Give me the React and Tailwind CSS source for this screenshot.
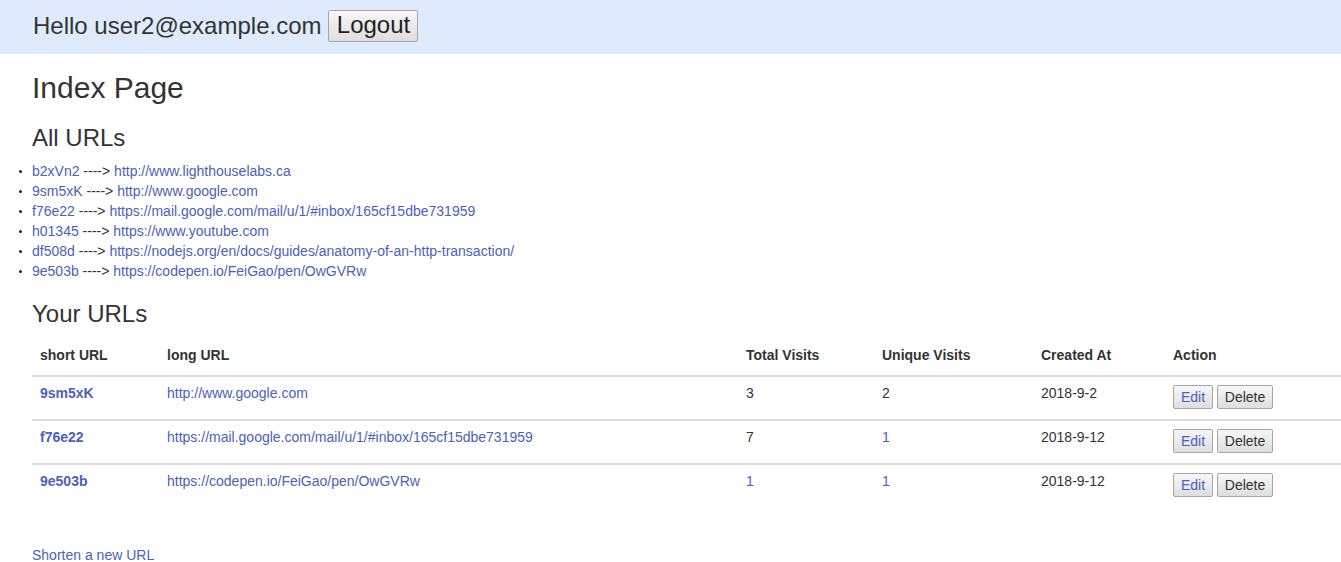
const link = 'text-[#4a5fc1]';

const allUrls = [
  ['b2xVn2', 'http://www.lighthouselabs.ca'],
  ['9sm5xK', 'http://www.google.com'],
  ['f76e22', 'https://mail.google.com/mail/u/1/#inbox/165cf15dbe731959'],
  ['h01345', 'https://www.youtube.com'],
  ['df508d', 'https://nodejs.org/en/docs/guides/anatomy-of-an-http-transaction/'],
  ['9e503b', 'https://codepen.io/FeiGao/pen/OwGVRw'],
];

const yourUrls = [
  { short: '9sm5xK', long: 'http://www.google.com', total: '3', totalLink: false, unique: '2', uniqueLink: false, created: '2018-9-2' },
  { short: 'f76e22', long: 'https://mail.google.com/mail/u/1/#inbox/165cf15dbe731959', total: '7', totalLink: false, unique: '1', uniqueLink: true, created: '2018-9-12' },
  { short: '9e503b', long: 'https://codepen.io/FeiGao/pen/OwGVRw', total: '1', totalLink: true, unique: '1', uniqueLink: true, created: '2018-9-12' },
];

const cols = 'grid grid-cols-[127px_579px_136px_159px_132px_1fr]';

function NativeButton({ children, className = '' }) {
  return (
    <button
      className={`rounded-[2px] border border-[#a6a6a6] bg-gradient-to-b from-[#f7f7f7] to-[#dedede] ${className}`}
    >
      {children}
    </button>
  );
}

export default function App() {
  return (
    <div className="min-h-[562px] bg-white font-['Liberation_Sans',Arial,sans-serif] text-[14px] text-[#333]">
      <header className="flex h-[54px] items-center bg-[#dfebfc] pl-[33px] text-[24px] leading-[28px]">
        <span className="-mt-[2px]">Hello user2@example.com</span>
        <NativeButton className="-mt-[2px] ml-[7px] h-[32px] w-[90px] pb-[3px] text-[24px] leading-[26px] text-[#222]">Logout</NativeButton>
      </header>

      <div className="pl-[32px]">
        <h1 className="mt-[17px] text-[30px] leading-[33px]">Index Page</h1>
        <h3 className="mt-[21px] text-[24px] leading-[26px]">All URLs</h3>
      </div>

      <ul className="mt-[10px]">
        {allUrls.map(([s, l]) => (
          <li key={s} className="flex h-[20px] items-center leading-[20px]">
            <span className="ml-[19px] mr-[10px] h-[3px] w-[3px] rounded-full bg-[#222]" />
            <a className={link}>{s}</a>
            <span>&nbsp;----&gt;&nbsp;</span>
            <a className={link}>{l}</a>
          </li>
        ))}
      </ul>

      <div className="pl-[32px]">
        <h3 className="mt-[20px] text-[24px] leading-[26px]">Your URLs</h3>

        <div className="mt-[10px] leading-[20px]">
          <div className={`${cols} h-[40px] border-b-2 border-[#ddd] pt-[8px] font-bold`}>
            <div className="px-[8px]">short URL</div>
            <div className="px-[8px]">long URL</div>
            <div className="px-[8px]">Total Visits</div>
            <div className="px-[8px]">Unique Visits</div>
            <div className="px-[8px]">Created At</div>
            <div className="px-[8px]">Action</div>
          </div>
          {yourUrls.map((r, i) => (
            <div key={r.short} className={`${cols} ${i > 0 ? 'h-[44px] border-t-2 border-[#ddd]' : 'h-[42px]'} pt-[6px]`}>
              <div className={`px-[8px] font-bold ${link}`}>{r.short}</div>
              <div className={`px-[8px] ${link}`}>{r.long}</div>
              <div className={`px-[8px] ${r.totalLink ? link : ''}`}>{r.total}</div>
              <div className={`px-[8px] ${r.uniqueLink ? link : ''}`}>{r.unique}</div>
              <div className="px-[8px]">{r.created}</div>
              <div className="flex gap-[4px] px-[8px] pt-[2px]">
                <NativeButton className={`h-[24px] w-[40px] ${link}`}>Edit</NativeButton>
                <NativeButton className="h-[24px] w-[56px] text-[#333]">Delete</NativeButton>
              </div>
            </div>
          ))}
        </div>

        <a className={`mt-[38px] block leading-[20px] ${link}`}>Shorten a new URL</a>
      </div>
    </div>
  );
}
